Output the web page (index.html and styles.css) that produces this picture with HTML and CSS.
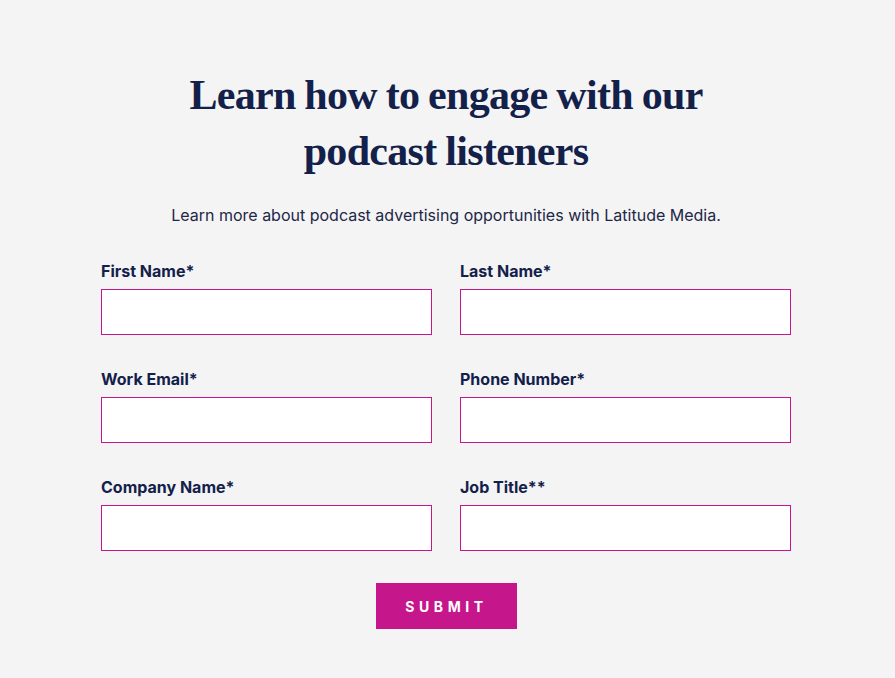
FILE: index.html
```html
<!DOCTYPE html>
<html lang="en">
<head>
<meta charset="utf-8">
<title>Learn how to engage with our podcast listeners</title>
<link rel="stylesheet" href="styles.css">
</head>
<body>
<main class="page">
  <section class="signup">
    <h1 class="signup-title">Learn how to engage with our<br>podcast listeners</h1>
    <p class="signup-intro">Learn more about podcast advertising opportunities with Latitude Media.</p>
    <form class="signup-form">
      <div class="field">
        <label class="field-label" for="fn">First Name*</label>
        <input class="field-input" id="fn" type="text">
      </div>
      <div class="field">
        <label class="field-label" for="ln">Last Name*</label>
        <input class="field-input" id="ln" type="text">
      </div>
      <div class="field">
        <label class="field-label" for="em">Work Email*</label>
        <input class="field-input" id="em" type="email">
      </div>
      <div class="field">
        <label class="field-label" for="ph">Phone Number*</label>
        <input class="field-input" id="ph" type="tel">
      </div>
      <div class="field">
        <label class="field-label" for="co">Company Name*</label>
        <input class="field-input" id="co" type="text">
      </div>
      <div class="field">
        <label class="field-label" for="jt">Job Title**</label>
        <input class="field-input" id="jt" type="text">
      </div>
      <div class="form-actions">
        <button class="submit-btn" type="button">SUBMIT</button>
      </div>
    </form>
  </section>
</main>
</body>
</html>
```
FILE: styles.css
```css
* { box-sizing: border-box; }
html, body { margin: 0; padding: 0; }
body {
  background: #f4f4f4;
  font-family: Inter, "Noto Sans", sans-serif;
  color: #13214a;
}
.page {
  display: flex;
  justify-content: center;
  padding-top: 67px;
}
.signup {
  width: 690px;
  margin-left: -3px;
  display: flex;
  flex-direction: column;
  align-items: center;
}
.signup-title {
  margin: 0;
  font-family: "Liberation Serif", "DejaVu Serif", serif;
  font-weight: 700;
  font-size: 42px;
  line-height: 56px;
  letter-spacing: -0.7px;
  word-spacing: -1px;
  text-align: center;
  color: #13214a;
}
.signup-intro {
  margin: 24px 0 0;
  font-size: 16px;
  line-height: 24px;
  color: #1d2748;
  text-align: center;
}
.signup-form {
  width: 100%;
  margin-top: 34px;
  display: grid;
  grid-template-columns: 331px 331px;
  column-gap: 28px;
  row-gap: 34px;
}
.field {
  display: flex;
  flex-direction: column;
  gap: 8px;
}
.field-label {
  font-size: 16px;
  line-height: 20px;
  font-weight: 700;
  color: #13214a;
}
.field-input {
  height: 46px;
  margin: 0;
  border: 1px solid #c6168d;
  border-radius: 0;
  background: #ffffff;
  outline: none;
}
.form-actions {
  grid-column: 1 / -1;
  display: flex;
  justify-content: center;
  margin-top: -2px;
}
.submit-btn {
  width: 141px;
  height: 46px;
  margin-left: 1px;
  border: 0;
  border-radius: 0;
  background: #c6168b;
  color: #ffffff;
  font-family: Inter, "Noto Sans", sans-serif;
  font-size: 14px;
  font-weight: 700;
  letter-spacing: 4.6px;
  padding: 0 0 0 0;
}
```
